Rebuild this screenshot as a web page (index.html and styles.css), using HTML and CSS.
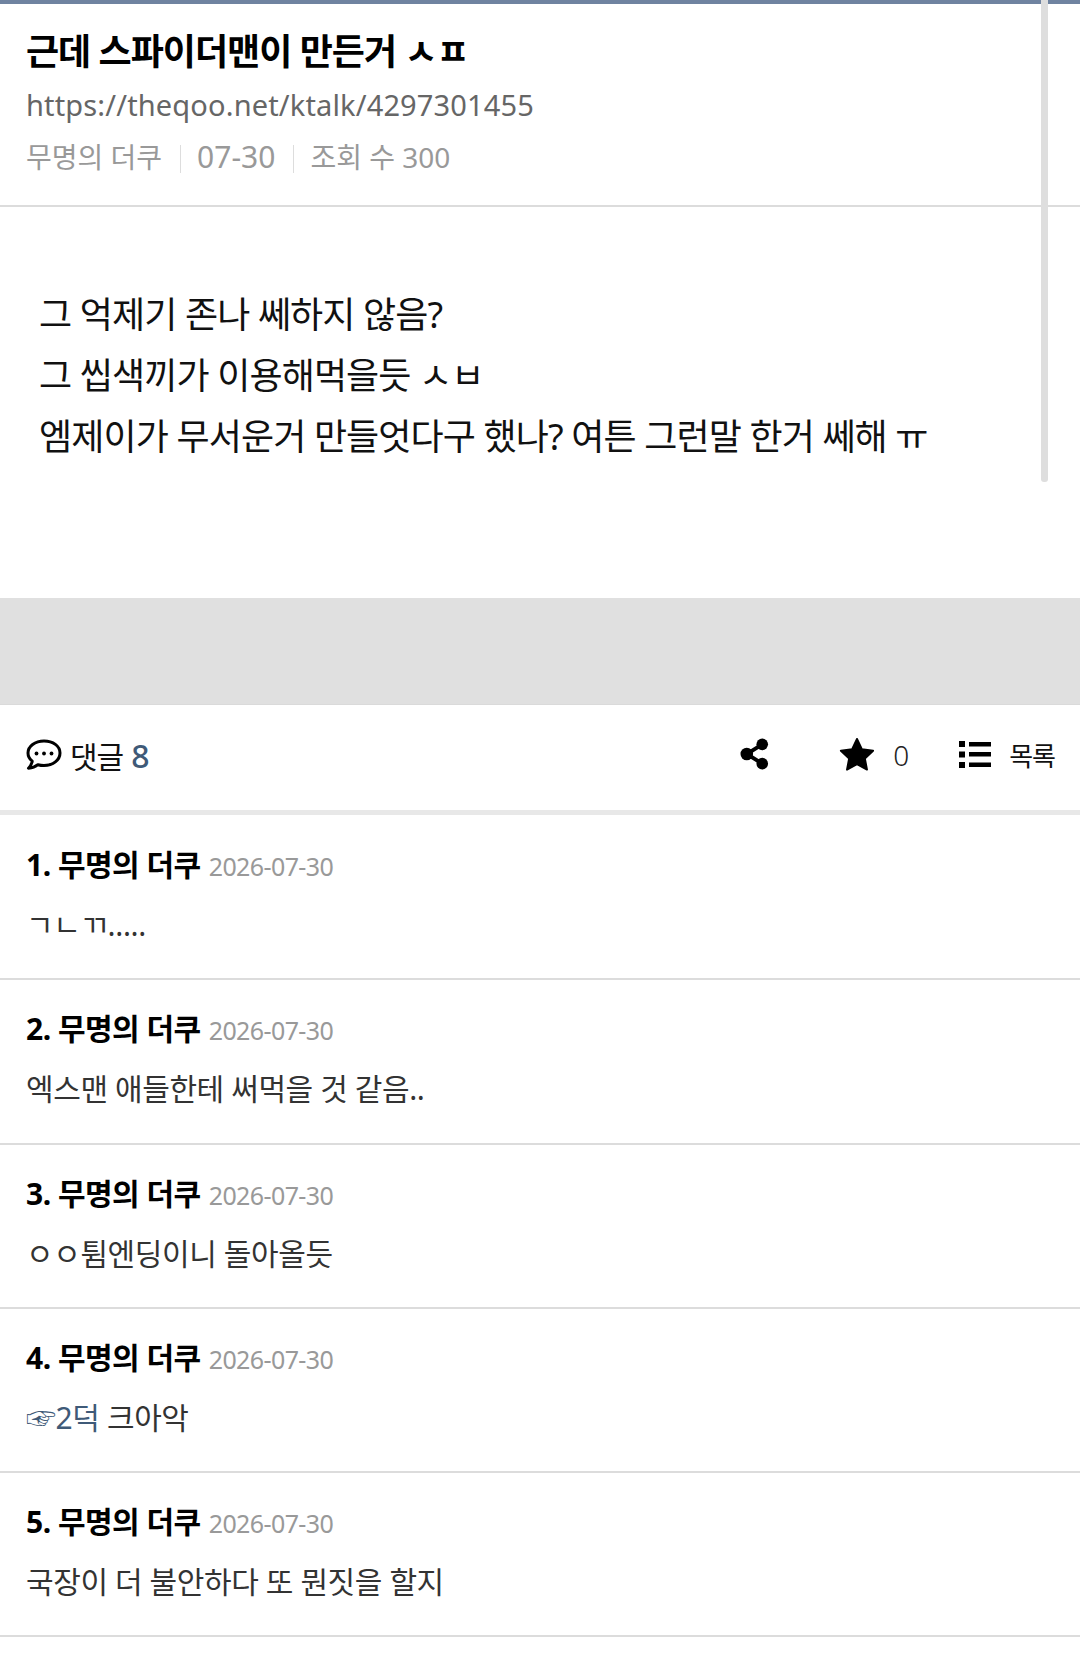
FILE: index.html
```html
<!DOCTYPE html>
<html lang="ko">
<head>
<meta charset="utf-8">
<title>근데 스파이더맨이 만든거 ㅅㅍ</title>
<link rel="stylesheet" href="styles.css">
</head>
<body>
<div class="page">
  <div class="scrollbar"></div>
  <header class="head">
    <h1 class="title">근데 스파이더맨이 만든거 ㅅㅍ</h1>
    <div class="url">https://theqoo.net/ktalk/4297301455</div>
    <div class="meta"><span>무명의 더쿠</span><i class="sep"></i><span class="meta-date">07-30</span><i class="sep"></i><span>조회 수 300</span></div>
  </header>
  <article class="body">
    <p>그 억제기 존나 쎄하지 않음?</p>
    <p>그 씹색끼가 이용해먹을듯 ㅅㅂ</p>
    <p>엠제이가 무서운거 만들엇다구 했나? 여튼 그런말 한거 쎄해 ㅠ</p>
  </article>
  <div class="gap"></div>
  <div class="bar">
    <div class="count">
      <svg class="ic-talk" viewBox="0 0 36 32"><path d="M18 2C9 2 2 7.400 2 14c0 3.200 1.600 6 4.200 8.200-.4 2.700-1.700 5-3.700 7 3.600-.2 7-1.400 9.400-3.500 1.900.5 4 .8 6.100.8 9 0 16-5.400 16-12.500S27 2 18 2z" fill="none" stroke="#000" stroke-width="3" stroke-linejoin="round"/><circle cx="10.500" cy="14.500" r="1.900"/><circle cx="18" cy="14.500" r="1.900"/><circle cx="25.500" cy="14.500" r="1.900"/></svg>
      <span class="count-label">댓글</span> <b class="count-num">8</b>
    </div>
    <div class="tools">
      <svg class="ic-share" viewBox="0 0 30 32"><path d="M23 6 7 16l16 10" fill="none" stroke="#000" stroke-width="4"/><circle cx="23" cy="6" r="6"/><circle cx="7" cy="16" r="6.500"/><circle cx="23" cy="26" r="6"/></svg>
      <svg class="ic-star" viewBox="0 0 36 34"><path d="M18 1l5 10.600 11.600 1.500-8.500 8 2.200 11.500L18 27l-10.300 5.600L9.900 21.100l-8.500-8L13 11.600z" stroke="#000" stroke-width="2" stroke-linejoin="round"/></svg>
      <span class="star-num">0</span>
      <svg class="ic-list" viewBox="0 0 32 27"><path d="M0 0h6v6H0zM0 10.500h6v6H0zM0 21h6v6H0zM10 1h22v4.500H10zM10 11h22v4.500H10zM10 21.500h22v4.500H10z"/></svg>
      <span class="list-label">목록</span>
    </div>
  </div>
  <ul class="comments">
    <li class="comment">
      <div class="c-head"><b class="c-name">1. 무명의 더쿠</b> <span class="c-date">2026-07-30</span></div>
      <div class="c-text">ㄱㄴㄲ.....</div>
    </li>
    <li class="comment">
      <div class="c-head"><b class="c-name">2. 무명의 더쿠</b> <span class="c-date">2026-07-30</span></div>
      <div class="c-text">엑스맨 애들한테 써먹을 것 같음..</div>
    </li>
    <li class="comment">
      <div class="c-head"><b class="c-name">3. 무명의 더쿠</b> <span class="c-date">2026-07-30</span></div>
      <div class="c-text">ㅇㅇ튐엔딩이니 돌아올듯</div>
    </li>
    <li class="comment">
      <div class="c-head"><b class="c-name">4. 무명의 더쿠</b> <span class="c-date">2026-07-30</span></div>
      <div class="c-text"><span class="reply">☞2덕</span> 크아악</div>
    </li>
    <li class="comment">
      <div class="c-head"><b class="c-name">5. 무명의 더쿠</b> <span class="c-date">2026-07-30</span></div>
      <div class="c-text">국장이 더 불안하다 또 뭔짓을 할지</div>
    </li>
  </ul>
</div>
</body>
</html>
```

FILE: styles.css
```css
* { box-sizing: border-box; }
html, body { margin: 0; padding: 0; }
body {
  background: #fff;
  color: #000;
  font-family: "Noto Sans", "Noto Sans CJK KR", sans-serif;
  overflow: hidden;
}
.page { position: relative; width: 1080px; height: 1657px; overflow: hidden; }
.scrollbar {
  position: absolute;
  top: 0;
  left: 1041px;
  width: 7px;
  height: 482px;
  background: #dedede;
  border-radius: 0 0 3px 3px;
}
.head {
  height: 207px;
  border-top: 4px solid #6f83a0;
  border-bottom: 2px solid #dcdcdc;
  padding: 0 26px;
}
.title {
  margin: 0;
  padding-top: 23px;
  font-size: 36px;
  line-height: 50px;
  font-weight: 700;
  letter-spacing: -1px;
  color: #000;
}
.url {
  font-size: 29px;
  line-height: 42px;
  margin-top: 7px;
  color: #666;
  font-weight: 400;
  letter-spacing: 0.15px;
}
.meta {
  display: flex;
  align-items: center;
  font-size: 28px;
  line-height: 42px;
  margin-top: 10px;
  color: #999;
  font-weight: 400;
}
.meta-date { font-size: 30px; }
.sep { width: 1px; height: 28px; margin: 4px 16px 0 18px; background: #ddd; }
.body { height: 391px; padding-top: 77px; padding-left: 39px; }
.body p {
  margin: 0;
  font-size: 36px;
  line-height: 61px;
  color: #111;
  font-weight: 400;
  letter-spacing: -0.88px;
  white-space: nowrap;
}
.gap { height: 107px; background: #e0e0e0; border-bottom: 1px solid #dadada; }
.bar {
  height: 110px;
  border-bottom: 5px solid #e8e8e8;
  display: flex;
  align-items: center;
  justify-content: space-between;
  padding: 0 25px 5px 26px;
}
.count { display: flex; align-items: center; font-size: 30px; }
.ic-talk { width: 36px; height: 32px; margin-right: 8px; }
.count-label { color: #111; font-weight: 400; letter-spacing: -1px; margin-right: 8px; }
.count-num { color: #3f5a78; font-weight: 500; font-size: 32px; }
.tools { display: flex; align-items: center; }
.ic-share { width: 29px; height: 32px; margin-right: 70px; margin-top: -2px; }
.ic-star { width: 36px; height: 33px; margin-right: 18px; margin-top: -2px; }
.star-num { font-size: 28px; color: #222; margin-right: 50px; font-weight: 300; }
.ic-list { width: 32px; height: 27px; margin-right: 18px; margin-top: -2px; }
.list-label { font-size: 26px; color: #111; letter-spacing: -1px; font-weight: 400; }
.comments { list-style: none; margin: 1px 0 0; padding: 0; }
.comment {
  height: 164.250px;
  border-bottom: 2px solid #dcdcdc;
  padding: 25px 26px 0;
}
.c-head { display: flex; align-items: baseline; gap: 8px; line-height: 48px; height: 48px; white-space: pre; }
.c-name { font-size: 30px; font-weight: 700; color: #000; letter-spacing: -0.5px; }
.c-date { font-size: 25px; color: #999; font-weight: 400; letter-spacing: -0.6px; }
.c-text { font-size: 30px; line-height: 44px; margin-top: 14px; color: #333; font-weight: 400; letter-spacing: -0.4px; white-space: nowrap; }
.reply { color: #3f5a78; }
```
